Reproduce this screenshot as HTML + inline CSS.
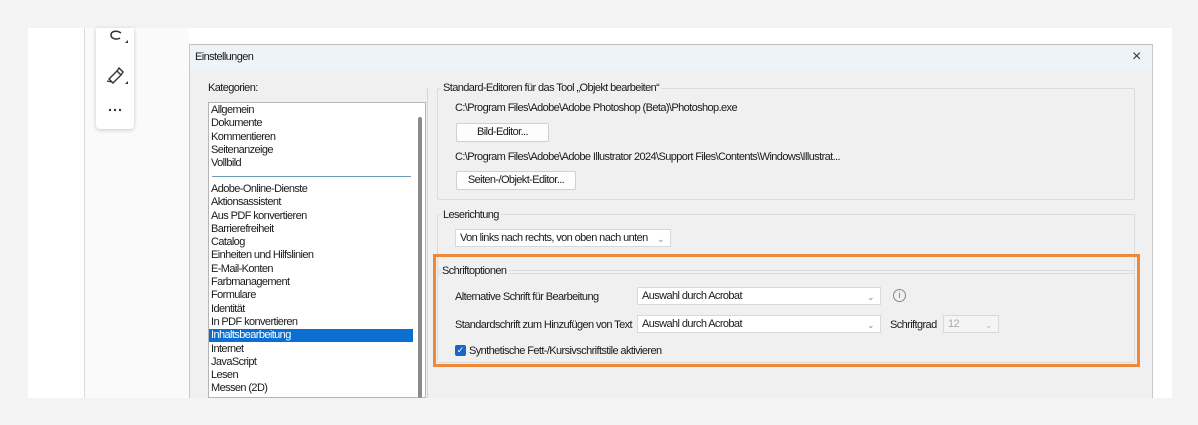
<!DOCTYPE html>
<html><head><meta charset="utf-8"><style>
*{margin:0;padding:0;box-sizing:border-box}
body{width:1198px;height:425px;background:#f3f3f3;position:relative;overflow:hidden;font-family:"Liberation Sans",Arial,sans-serif;font-size:11px;color:#1a1a1a;letter-spacing:-0.6px}
.a{position:absolute;white-space:nowrap}
.btn{position:absolute;background:#fdfdfd;border:1px solid #d0d0d0;border-radius:2px;text-align:center;line-height:17px}
.sel{position:absolute;background:#fff;border:1px solid #d9d9d9;line-height:16px;padding-left:4px}
.sel .ch{position:absolute;right:6px;top:1px;color:#888;font-size:9px}
.grp{position:absolute;border:1px solid #dcdcdc;border-radius:2px}
</style></head><body>
<div class="a" style="left:28px;top:28px;width:1144px;height:370px;background:#fff"></div>
<div class="a" style="left:84px;top:28px;width:1px;height:370px;background:#dcdcdc"></div>
<div class="a" style="left:85px;top:28px;width:104px;height:370px;background:#fafafa"></div>
<div class="a" style="left:96px;top:28px;width:38px;height:101px;background:#fff;border-radius:0 0 4px 4px;box-shadow:0 1px 4px rgba(0,0,0,.2)"></div>
<svg class="a" style="left:104px;top:28px" width="24" height="96" viewBox="0 0 24 96">
<path d="M17 5 C13 2 7 3 7 7 C7 11 13 12 16 10" fill="none" stroke="#333" stroke-width="1.5"/>
<path d="M21 15 l3 -3 v3z" fill="#333"/>
<path d="M5 51 l8 -8 l4 4 l-8 8 z M13 43 l2 -3 l4 4 l-2 3" fill="none" stroke="#333" stroke-width="1.4"/>
<path d="M3 53 l5 1" stroke="#333" stroke-width="1.4"/>
<path d="M21 56 l3 -3 v3z" fill="#333"/>
<circle cx="6" cy="82" r="1.2" fill="#333"/><circle cx="11" cy="82" r="1.2" fill="#333"/><circle cx="16" cy="82" r="1.2" fill="#333"/>
</svg>
<div class="a" style="left:189px;top:44px;width:964px;height:354px;background:#f0f0f0;border-left:1px solid #c8c8c8;border-top:1px solid #c0c0c0;border-right:1px solid #c8c8c8"></div>
<div class="a" style="left:190px;top:45px;width:962px;height:25px;background:#eef3f9"></div>
<div class="a" style="left:195px;top:51px">Einstellungen</div>
<div class="a" style="left:1132px;top:48px;font-size:16px;color:#333">×</div>
<div class="a" style="left:208px;top:82px">Kategorien:</div>
<div class="a" style="left:208px;top:102px;width:218px;height:296px;background:#fff;border:1px solid #b5b5b5"></div>
<div class="a" style="left:418px;top:117px;width:4px;height:281px;background:#8a8a8a;border-radius:2px"></div>
<div class="a" style="left:212px;top:176px;width:199px;height:1px;background:#6f9cb5"></div>
<div class="a" style="left:209px;top:329px;width:204px;height:13px;background:#0a6fd1"></div>
<div class="a" style="left:211px;top:104px;line-height:13.3px">Allgemein<br>Dokumente<br>Kommentieren<br>Seitenanzeige<br>Vollbild</div>
<div class="a" style="left:211px;top:183px;line-height:13.3px">Adobe-Online-Dienste<br>Aktionsassistent<br>Aus PDF konvertieren<br>Barrierefreiheit<br>Catalog<br>Einheiten und Hilfslinien<br>E-Mail-Konten<br>Farbmanagement<br>Formulare<br>Identität<br>In PDF konvertieren<br><span style="color:#fff">Inhaltsbearbeitung</span><br>Internet<br>JavaScript<br>Lesen<br>Messen (2D)</div>
<div class="a" style="left:427px;top:88px;width:1px;height:310px;background:#d6d6d6"></div>
<div class="grp" style="left:437px;top:88px;width:698px;height:112px"></div>
<div class="a" style="left:441px;top:82px;background:#f0f0f0;padding:0 2px">Standard-Editoren für das Tool „Objekt bearbeiten“</div>
<div class="a" style="left:455px;top:102px">C:\Program Files\Adobe\Adobe Photoshop (Beta)\Photoshop.exe</div>
<div class="btn" style="left:456px;top:123px;width:93px;height:19px">Bild-Editor...</div>
<div class="a" style="left:455px;top:151px">C:\Program Files\Adobe\Adobe Illustrator 2024\Support Files\Contents\Windows\Illustrat...</div>
<div class="btn" style="left:456px;top:171px;width:120px;height:19px">Seiten-/Objekt-Editor...</div>
<div class="grp" style="left:437px;top:214px;width:698px;height:60px"></div>
<div class="a" style="left:441px;top:209px;background:#f0f0f0;padding:0 2px">Leserichtung</div>
<div class="sel" style="left:455px;top:229px;width:216px;height:18px">Von links nach rechts, von oben nach unten<span class="ch">⌄</span></div>
<div class="grp" style="left:437px;top:270px;width:698px;height:93px"></div>
<div class="a" style="left:442px;top:265px;background:#f0f0f0;padding-right:3px">Schriftoptionen</div>
<div class="a" style="left:455px;top:291px">Alternative Schrift für Bearbeitung</div>
<div class="sel" style="left:637px;top:287px;width:244px;height:18px">Auswahl durch Acrobat<span class="ch">⌄</span></div>
<div class="a" style="left:893px;top:289px;width:13px;height:13px;border:1px solid #888;border-radius:50%;font-size:9px;text-align:center;line-height:11px;color:#777;letter-spacing:0">i</div>
<div class="a" style="left:455px;top:319px">Standardschrift zum Hinzufügen von Text</div>
<div class="sel" style="left:637px;top:315px;width:244px;height:18px">Auswahl durch Acrobat<span class="ch">⌄</span></div>
<div class="a" style="left:890px;top:319px">Schriftgrad</div>
<div class="sel" style="left:943px;top:315px;width:56px;height:18px;background:#f4f4f4;color:#aaa">12<span class="ch" style="color:#bbb">⌄</span></div>
<div class="a" style="left:455px;top:345px;width:11px;height:11px;background:#1a64c8;border-radius:2px;color:#fff;font-size:9px;line-height:11px;text-align:center;letter-spacing:0">✓</div>
<div class="a" style="left:469px;top:345px">Synthetische Fett-/Kursivschriftstile aktivieren</div>
<div class="a" style="left:433px;top:254px;width:707px;height:113px;border:3px solid #f0883a"></div>
</body></html>
